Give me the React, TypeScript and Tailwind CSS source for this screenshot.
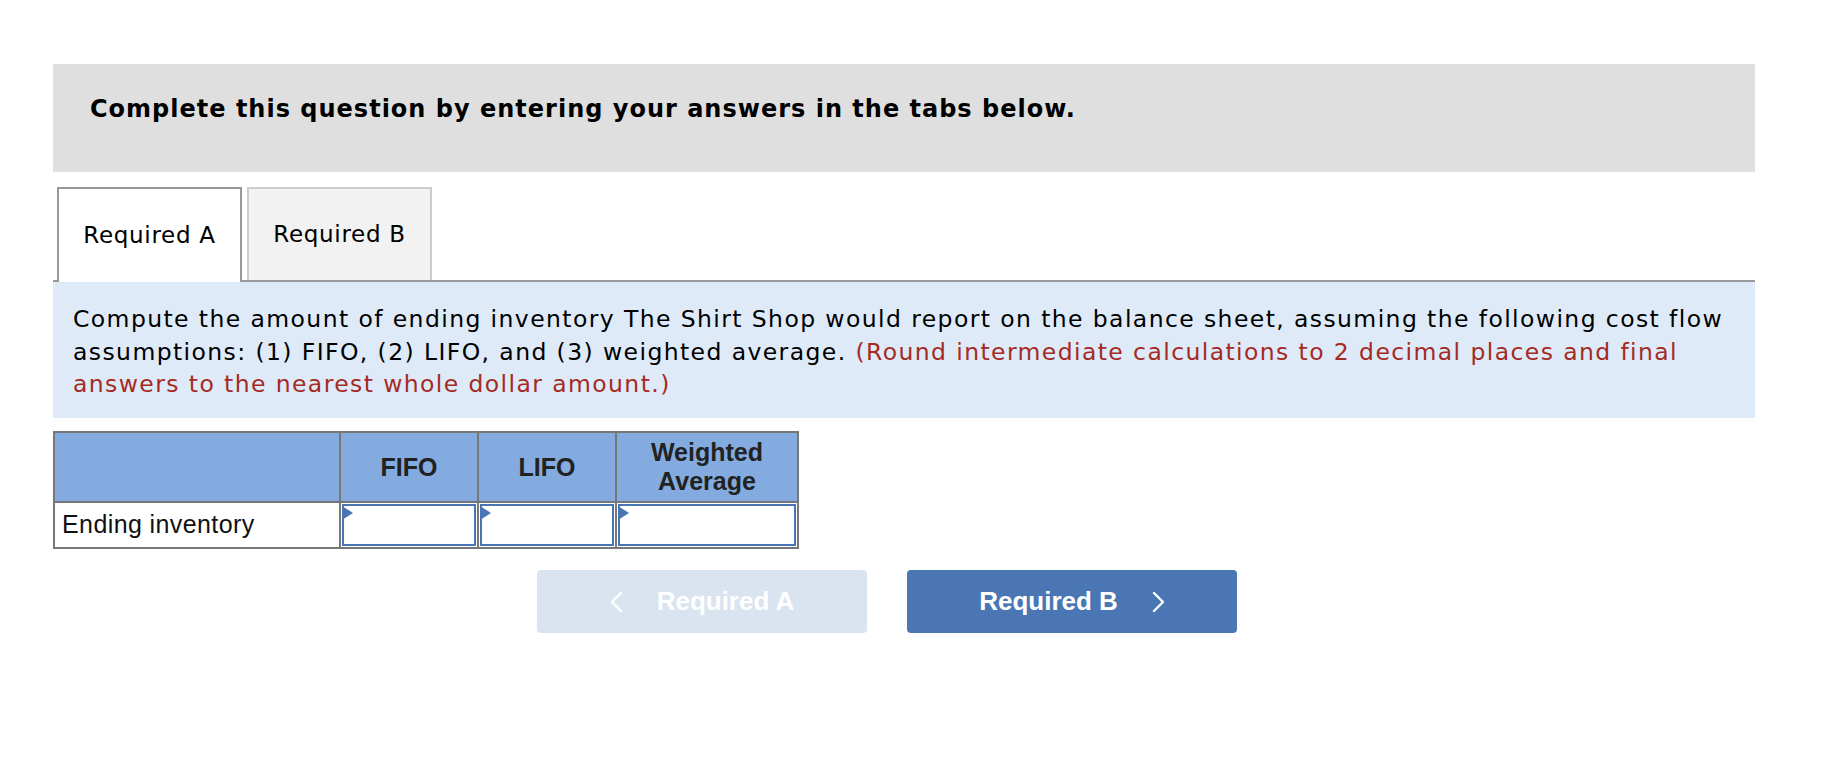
import React from "react";

const verdana = { fontFamily: '"DejaVu Sans", Verdana, sans-serif' };
const arial = { fontFamily: '"Liberation Sans", Arial, Helvetica, sans-serif' };

function Chevron({ dir }: { dir: "left" | "right" }) {
  return (
    <svg width="13" height="20" viewBox="0 0 13 20" fill="none" className="shrink-0">
      <polyline
        points={dir === "left" ? "11,1 2,10 11,19" : "2,1 11,10 2,19"}
        stroke="white"
        strokeWidth="2.4"
        strokeLinecap="round"
        strokeLinejoin="round"
      />
    </svg>
  );
}

function AnswerCell() {
  return (
    <div className="relative h-full p-[1px]">
      <input
        type="text"
        className="h-full w-full border-2 border-[#4a75b5] bg-white px-2 text-[22px] outline-none"
        style={arial}
      />
      {/* little marker in the corner of each entry box */}
      <span className="absolute left-[1px] top-[3px] h-0 w-0 border-y-[7px] border-l-[11px] border-y-transparent border-l-[#4a75b5]" />
    </div>
  );
}

export default function App() {
  const headCell = "flex items-center justify-center border-b-2 border-r-2 border-[#777] bg-[#83abdf] text-center text-[25px] font-bold leading-[29px] text-[#222]";
  const bodyCell = "border-b-2 border-r-2 border-[#777] bg-white";

  return (
    <div className="min-h-[757px] w-full bg-white pl-[53px] pt-[64px]">
      <div className="w-[1702px]">
        <div className="h-[108px] bg-[#dfdfdf] pl-[37px] pt-[27px]" style={verdana}>
          <h2 className="text-[24px] font-bold leading-normal tracking-[1px] text-black">
            Complete this question by entering your answers in the tabs below.
          </h2>
        </div>

        <div className="mt-[15px] flex h-[95px] items-end border-b-2 border-[#999]" style={verdana}>
          <button className="relative z-10 -mb-[2px] ml-[4px] flex h-[95px] w-[185px] items-center justify-center border-2 border-b-0 border-[#999] bg-white text-[23px] tracking-[0.7px] text-black">
            Required A
          </button>
          <button className="ml-[5px] flex h-[93px] w-[185px] items-center justify-center border-2 border-b-0 border-[#ccc] bg-[#f2f2f2] text-[23px] tracking-[0.7px] text-black">
            Required B
          </button>
        </div>

        <div className="h-[136px] bg-[#deeaf7] px-[20px] pt-[21px] text-[23.5px] leading-[32.5px] tracking-[1.4px] text-black" style={verdana}>
          Compute the amount of ending inventory The Shirt Shop would report on the balance sheet, assuming the following cost flow assumptions: (1) FIFO, (2) LIFO, and (3) weighted average.{" "}
          <span className="text-[#a52a24]">
            (Round intermediate calculations to 2 decimal places and final answers to the nearest whole dollar amount.)
          </span>
        </div>

        <div
          className="mt-[13px] grid w-[746px] grid-cols-[286px_138px_138px_182px] grid-rows-[70px_46px] border-l-2 border-t-2 border-[#777]"
          style={arial}
        >
          <div className={headCell} />
          <div className={headCell}>FIFO</div>
          <div className={headCell}>LIFO</div>
          <div className={headCell}>
            Weighted
            <br />
            Average
          </div>
          <div className={`${bodyCell} flex items-center pl-[7px] text-[25px] tracking-[0.4px] text-[#111]`}>Ending inventory</div>
          <div className={bodyCell}>
            <AnswerCell />
          </div>
          <div className={bodyCell}>
            <AnswerCell />
          </div>
          <div className={bodyCell}>
            <AnswerCell />
          </div>
        </div>

        <div className="ml-[484px] mt-[21px] flex gap-[40px]" style={arial}>
          <button
            disabled
            className="flex h-[63px] w-[330px] items-center justify-center gap-[34px] rounded-[4px] bg-[#dae4f0] text-[26px] font-bold text-white"
          >
            <Chevron dir="left" />
            Required A
          </button>
          <button className="flex h-[63px] w-[330px] items-center justify-center gap-[34px] rounded-[4px] bg-[#4a76b4] text-[26px] font-bold text-white">
            Required B
            <Chevron dir="right" />
          </button>
        </div>
      </div>
    </div>
  );
}
